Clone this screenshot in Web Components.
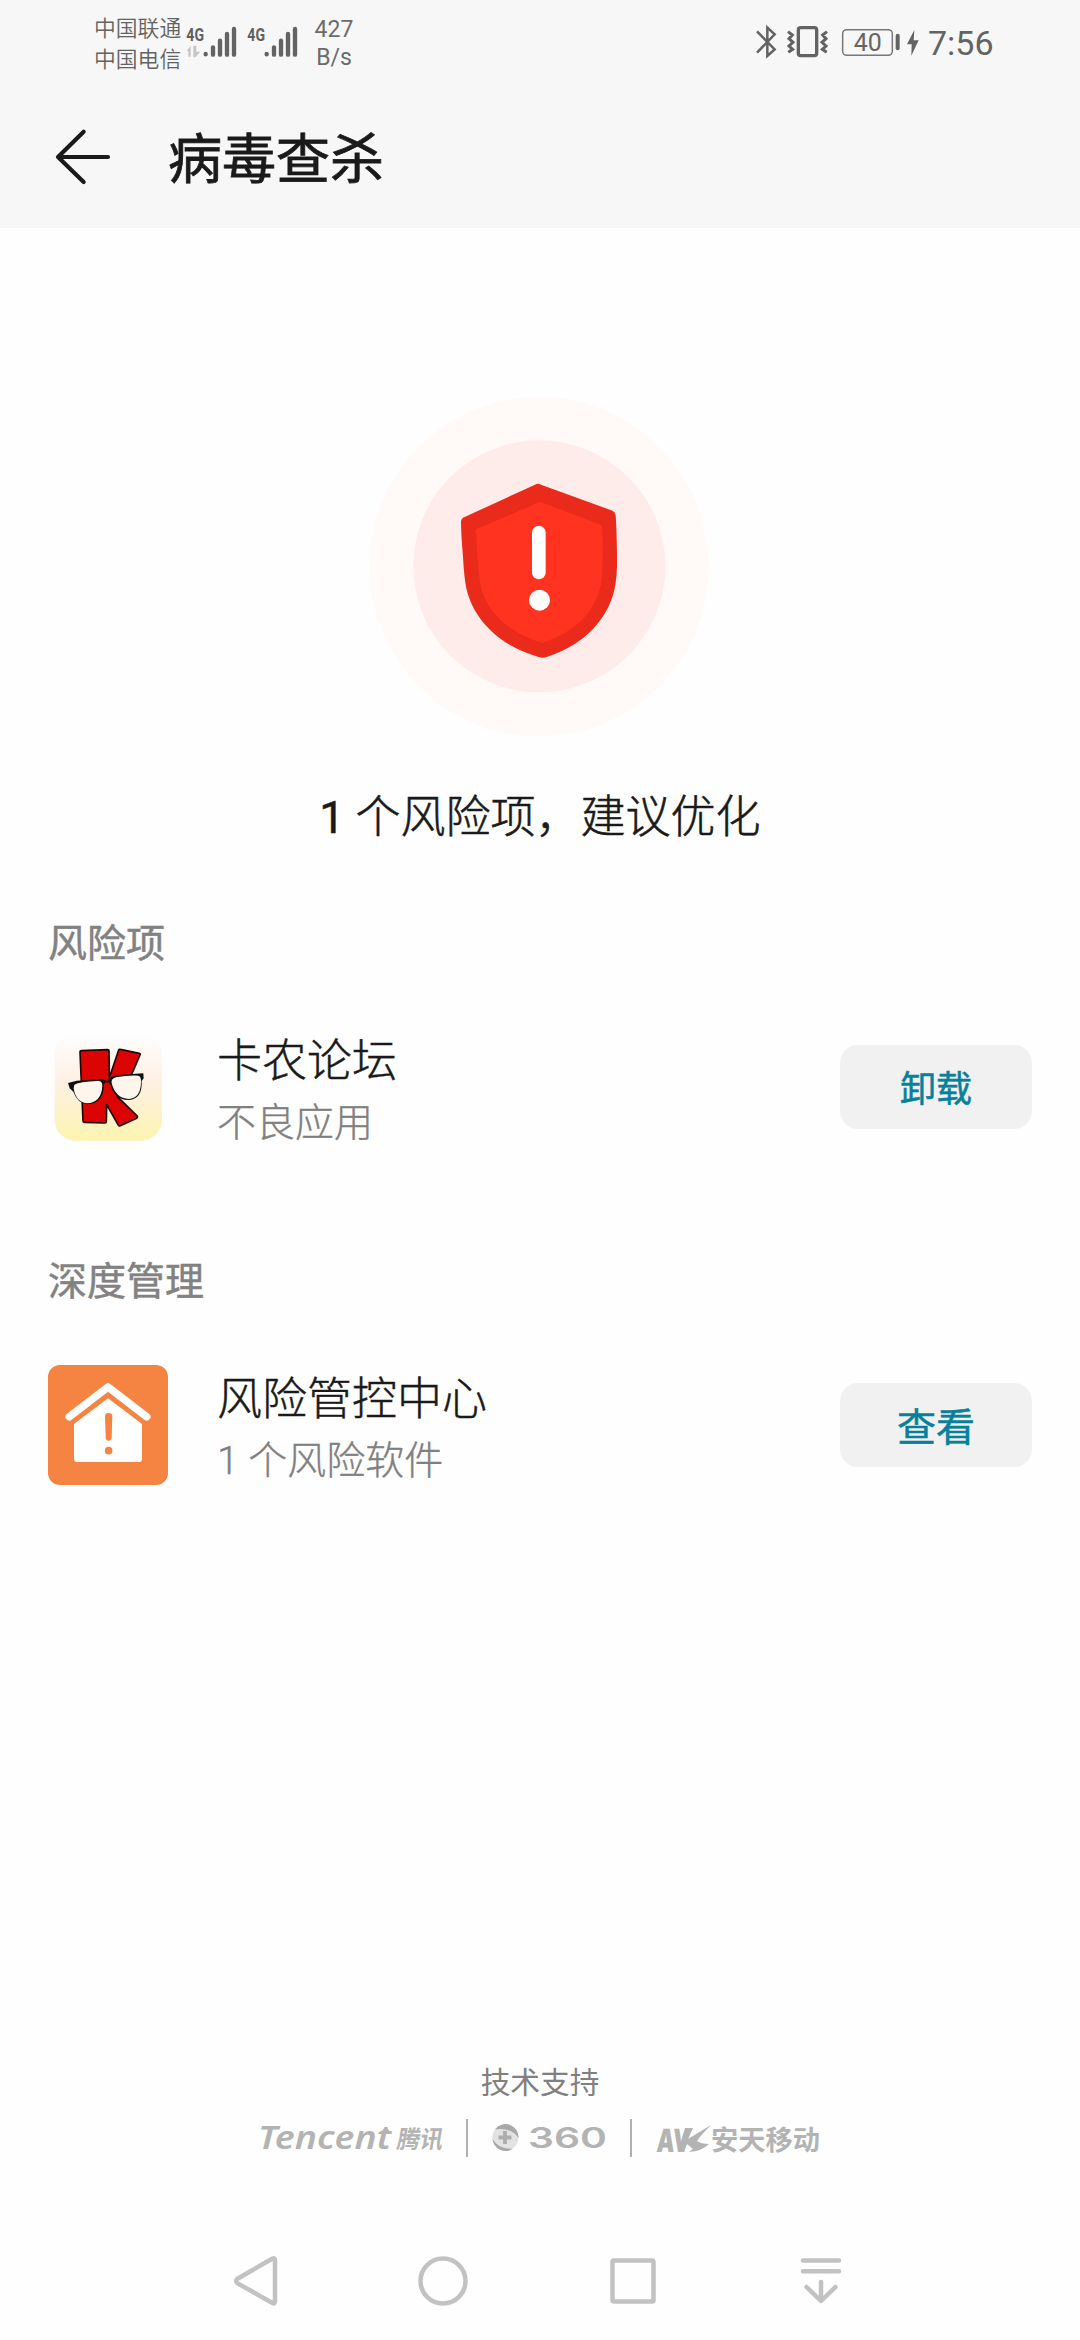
<!DOCTYPE html>
<html lang="zh-CN">
<head>
<meta charset="utf-8">
<title>病毒查杀</title>
<style>
html,body{margin:0;padding:0;background:#fefefe}
body{width:1080px;height:2340px;overflow:hidden;font-family:Roboto,"Noto Sans CJK SC",sans-serif}
</style>
</head>
<body>
<virus-scan-screen></virus-scan-screen>
<script>
const define = (name, html) => customElements.define(name, class extends HTMLElement {
  constructor() {
    super();
    const t = document.createElement('template');
    t.innerHTML = html;
    this.attachShadow({mode: 'open'}).append(t.content.cloneNode(true));
  }
});

define('signal-bars', `
<style>
:host,svg{display:block}
text{font:700 57px Roboto,sans-serif;fill:#5f5f5f}
.data{display:var(--data,none)}
</style>
<svg width="54" height="44" viewBox="0 0 162 132">
  <text x="1" y="53" textLength="53" lengthAdjust="spacingAndGlyphs">4G</text>
  <path class="data" d="M2 84L14 68V101H7V84ZM22 68H31V86H43L28 103H22Z" fill="#c6c6c6"/>
  <path d="M59 93v1M81 73v22M102 53v42M123 33v62M144 18v77" stroke="#636363" stroke-width="13" stroke-linecap="round"/>
</svg>`);

define('status-bar', `
<style>
:host{display:flex;height:86px;color:#636363}
.carriers{margin-left:94px;width:90px;padding-top:11px;font:350 21.8px/31.3px "Noto Sans CJK SC",sans-serif;white-space:nowrap}
.sig{display:flex;padding-top:23px;margin-left:2px;gap:7px}
.rate{margin-left:8px;width:50px;text-align:center;padding-top:16px;font:400 23px/28px Roboto,sans-serif;color:#6b6b6b}
.right{margin-left:auto;margin-right:86px;display:flex;padding-top:20px}
svg{display:block}
.time{font:400 34px/46px Roboto,sans-serif;margin-left:8px;width:66px}
</style>
<div class="carriers"><div>中国联通</div><div>中国电信</div></div>
<div class="sig"><signal-bars style="--data:inline"></signal-bars><signal-bars></signal-bars></div>
<div class="rate">427<br>B/s</div>
<div class="right">
<svg width="165" height="50" viewBox="75 60 495 150">
  <path d="M81 94L134 148 112 168V83L134 103 81 158" fill="none" stroke="#636363" stroke-width="7.5"/>
  <rect x="205" y="83" width="55" height="84" rx="7" fill="none" stroke="#636363" stroke-width="10"/>
  <path d="M174 95l13 10-10 11 12 11-12 11 11 10-13 9M291 95l-13 10 10 11-12 11 12 11-11 10 13 9" fill="none" stroke="#636363" stroke-width="9"/>
  <rect x="338" y="89" width="149" height="77" rx="12" fill="none" stroke="#777" stroke-width="4.5"/>
  <text x="371" y="153" font-family="Roboto" font-size="77" font-weight="400" textLength="84" lengthAdjust="spacingAndGlyphs" fill="#666">40</text>
  <path d="M503 107v38" stroke="#636363" stroke-width="12" stroke-linecap="round"/>
  <path d="M553 90L531 133h14l-1 34 22-46h-15z" fill="#636363"/>
</svg>
<div class="time">7:56</div>
</div>`);

define('title-bar', `
<style>
:host{display:flex;align-items:flex-start;height:142px;padding:0 0 0 51px;color:#1a1a1a}
svg{display:block;margin-top:42px}
h1{margin:31px 0 0 57px;font:400 54px/78px "Noto Sans CJK SC",sans-serif;-webkit-text-stroke:.8px currentColor}
</style>
<svg width="60" height="58" viewBox="153 114 180 174"><path d="M251 125L174 201 251 276M174 201H324" fill="none" stroke="#1a1a1a" stroke-width="12.500" stroke-linecap="round" stroke-linejoin="round"/></svg>
<h1><slot></slot></h1>`);

define('risk-summary', `
<style>
:host{display:flex;flex-direction:column;align-items:center;padding-top:152px;height:495px}
svg{display:block}
p{margin:35px 0 0;font:300 45px/66px Roboto,"Noto Sans CJK SC",sans-serif;-webkit-text-stroke:.55px currentColor;color:#1a1a1a;white-space:nowrap}
</style>
<svg width="380" height="370" viewBox="0 0 1140 1110">
  <circle cx="567" cy="560" r="509" fill="#fff9f8"/>
  <circle cx="568" cy="559" r="378" fill="#feecea"/>
  <path d="M555 314Q564 309 573 314L787 392Q796 396 797 406Q800 450 801 520V560Q799 610 790 642C762 735 688 800 587 832Q576 835 566 831C455 800 372 725 349 625Q342 590 339 530Q333 460 333 425Q334 415 344 411Z" fill="#ea2a1a"/>
  <path d="M571 365L756 436Q759 480 758 530Q757 590 752 618C730 700 685 750 577 789C470 755 400 690 389 600Q380 530 378 448Z" fill="#ff3320"/>
  <rect x="546" y="437" width="41" height="161" rx="20.5" fill="#fff"/>
  <circle cx="568.500" cy="660.500" r="31.500" fill="#fff"/>
</svg>
<p><slot></slot></p>`);

define('app-row', `
<style>
:host{display:flex;height:120px;padding:0 48px;align-items:center}
.icon{width:120px;height:120px;flex:none}
.text{margin-left:49px;flex:1;padding-top:8px}
.name{font:300 45px/64px Roboto,"Noto Sans CJK SC",sans-serif;-webkit-text-stroke:.45px currentColor;color:#1a1a1a;height:64px}
.desc{font:300 39px/58px Roboto,"Noto Sans CJK SC",sans-serif;-webkit-text-stroke:.35px currentColor;color:#808080;height:58px}
</style>
<div class="icon"><slot name="icon"></slot></div>
<div class="text"><div class="name"><slot name="name"></slot></div><div class="desc"><slot name="desc"></slot></div></div>
<slot name="action"></slot>`);

define('pill-button', `
<style>
:host{display:block;flex:none}
button{display:block;width:192px;height:84px;border:0;padding:0 0 2px;border-radius:18px;background:#f1f1f1;color:#07809b;font:400 var(--size,39px)/82px "Noto Sans CJK SC",sans-serif;-webkit-text-stroke:.5px currentColor}
</style>
<button><slot></slot></button>`);

define('forum-icon', `
<style>:host,svg{display:block}</style>
<svg width="120" height="120" viewBox="54 381 360 360">
  <defs><linearGradient id="g" x1="0" y1="0" x2="0" y2="1"><stop offset="0" stop-color="#fefefe"/><stop offset=".45" stop-color="#fef0e3"/><stop offset=".7" stop-color="#fdf2cd"/><stop offset="1" stop-color="#fcf4b0"/></linearGradient></defs>
  <rect x="74" y="400" width="322" height="322" rx="62" fill="url(#g)"/>
  <g fill="#dc0303" stroke="#1d0806" stroke-width="5" stroke-linejoin="round">
    <path d="M150 456Q150 452 154 452L233 449Q237 449 237 453L238 533 266 450Q267 447 271 448L328 460Q332 461 330 465L302 530 262 590 322 648Q324 652 320 655L271 677Q266 679 264 674L230 614 229 665Q229 669 225 669L163 667Q159 667 159 663Z"/>
  </g>
  <path d="M114 549L140 542 210 538Q224 537 232 543Q240 530 262 525L340 520 341 535 335 543Q338 596 297 600Q255 602 240 551Q229 542 222 552Q222 610 172 613Q143 610 130 575L119 565Z" fill="#111"/>
  <path d="M133 554Q150 545 202 543Q218 542 217 557Q215 607 170 610Q137 606 131 565ZM245 550Q242 537 258 532Q290 526 324 527Q333 529 333 542Q334 594 296 597Q257 595 245 550Z" fill="#fef5ec"/>
</svg>`);

define('house-icon', `
<style>:host,svg{display:block}</style>
<svg width="120" height="120" viewBox="54 375 360 360">
  <rect x="54" y="375" width="360" height="360" rx="36" fill="#f58442"/>
  <path d="M118 530L234 441 350 530" fill="none" stroke="#fff" stroke-width="23" stroke-linecap="round" stroke-linejoin="round"/>
  <path d="M234 475L336 552V656Q336 666 326 666H143Q132 666 132 656V552Z" fill="#fff"/>
  <path d="M225 529Q225 519 236 519Q247 519 247 529L245 594Q244 602 236 602Q228 602 227 594Z" fill="#f58442"/>
  <circle cx="236" cy="632" r="11.500" fill="#f58442"/>
</svg>`);

define('section-title', `
<style>:host{display:block;height:58px;padding-left:48px;font:400 39px/58px "Noto Sans CJK SC",sans-serif;-webkit-text-stroke:.5px currentColor;color:#828282}</style>
<slot></slot>`);

define('tech-support', `
<style>
:host{display:flex;flex-direction:column;align-items:center;color:#808080;font:400 29.7px/44px "Noto Sans CJK SC",sans-serif}
svg{display:block;margin-top:4px}
text{fill:#b3b3b3}
</style>
<div>技术支持</div>
<svg width="600" height="62" viewBox="240 2107 600 62">
  <text x="258" y="2149" font-family="Noto Sans, Open Sans" font-style="italic" font-weight="600" font-size="32" textLength="133" lengthAdjust="spacingAndGlyphs">Tencent</text>
  <path d="M379 2134L387 2128 392 2134Z" fill="#b3b3b3"/>
  <text transform="translate(396 2147.500) skewX(-10)" font-family="Noto Sans CJK SC" font-weight="700" font-size="24.500" textLength="46" lengthAdjust="spacingAndGlyphs">腾讯</text>
  <path d="M467 2119v38M631 2119v38" stroke="#b0b0b0" stroke-width="2"/>
  <circle cx="505.500" cy="2137.500" r="13" fill="#e2e2e2"/>
  <path d="M495 2129.500A13 13 0 0 1 518.500 2138Q511 2127 495 2129.500ZM492.500 2139A13 13 0 0 0 513 2148.500Q499 2150 492.500 2139Z" fill="#a8a8a8"/>
  <path d="M505 2131v13M498.500 2137.500h13" stroke="#adadad" stroke-width="3.800"/>
  <text x="528" y="2148" font-family="Inter" font-weight="600" font-size="28.500" textLength="79" lengthAdjust="spacingAndGlyphs">360</text>
  <text transform="translate(656 2151.500) skewX(-4)" font-family="Inter" font-weight="900" font-size="32" textLength="34" lengthAdjust="spacingAndGlyphs">AV</text>
  <path d="M685 2128H693L688 2139 711 2125Q700 2136 697 2141 701 2144 709 2144 702 2151 689 2152L693 2149 687 2144 684 2151H678Z" fill="#b3b3b3"/>
  <text x="711" y="2149.500" font-family="Noto Sans CJK SC" font-weight="700" font-size="27" textLength="109" lengthAdjust="spacingAndGlyphs">安天移动</text>
</svg>`);

define('nav-bar', `
<style>:host{display:flex;justify-content:space-between;padding:0 234px 0 230px}svg{display:block}path,circle,rect{fill:none;stroke:#c2c2c2;stroke-width:4.500;stroke-linejoin:round;stroke-linecap:round}</style>
<svg width="50" height="60" viewBox="230 2250 50 60"><path d="M272.500 2258.500Q275 2257.500 275 2260.500V2301Q275 2304.500 272.500 2303L237 2283Q235.500 2281 237 2279Z"/></svg>
<svg width="56" height="60" viewBox="416 2250 56 60"><circle cx="444" cy="2281" r="22.500"/></svg>
<svg width="56" height="60" viewBox="604 2250 56 60"><rect x="611.500" y="2260.500" width="41" height="41" rx="1.500"/></svg>
<svg width="50" height="60" viewBox="796 2250 50 60"><path d="M803 2260.500H839M803 2271.300H839M821 2282V2301M806.500 2287L821 2301 835.500 2287"/></svg>`);

define('virus-scan-screen', `
<style>
:host{display:flex;flex-direction:column;width:1080px;height:2340px;background:#fefefe}
header{background:#f7f7f7;height:228px}
.risk{margin-top:36px}
.manage{margin-top:102px}
.count{font-weight:400}
app-row{margin-top:58px}
tech-support{margin-top:auto;margin-bottom:81px}
nav-bar{margin-bottom:30px}
</style>
<header><status-bar></status-bar><title-bar>病毒查杀</title-bar></header>
<risk-summary><span class="count">1</span> 个风险项，建议优化</risk-summary>
<section-title class="risk">风险项</section-title>
<app-row><forum-icon slot="icon"></forum-icon><span slot="name">卡农论坛</span><span slot="desc">不良应用</span><pill-button slot="action" style="--size:36px">卸载</pill-button></app-row>
<section-title class="manage">深度管理</section-title>
<app-row><house-icon slot="icon"></house-icon><span slot="name">风险管控中心</span><span slot="desc">1 个风险软件</span><pill-button slot="action">查看</pill-button></app-row>
<tech-support></tech-support>
<nav-bar></nav-bar>`);
</script>
</body>
</html>
